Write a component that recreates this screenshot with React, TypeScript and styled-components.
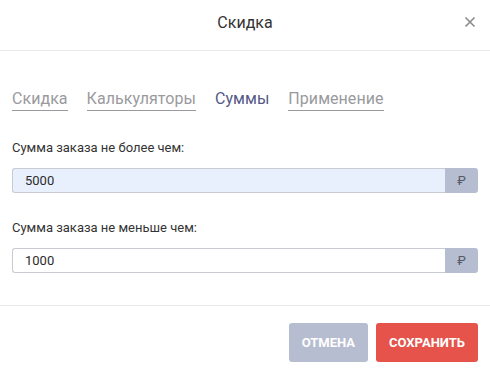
import React, { ReactElement, useState } from 'react'
import styled, { createGlobalStyle } from 'styled-components'

const GlobalStyle = createGlobalStyle`
  * { box-sizing: border-box; }
  body {
    margin: 0;
    background: #fff;
    font-family: Roboto, 'Noto Sans', sans-serif;
  }
`

const Modal = styled.div`
  width: 490px;
  height: 376px;
  background: #fff;
  display: flex;
  flex-direction: column;
`

const Header = styled.div`
  position: relative;
  height: 51px;
  border-bottom: 1px solid #e9e9ec;
  display: flex;
  align-items: center;
  justify-content: center;
  padding-bottom: 6px;
`

const Title = styled.h2`
  margin: 0;
  font-size: 16px;
  font-weight: 400;
  color: #333;
`

const CloseButton = styled.button`
  position: absolute;
  right: 12px;
  top: 14px;
  width: 16px;
  height: 16px;
  padding: 0;
  border: none;
  background: none;
  cursor: pointer;
  color: #8a8a8a;
`

const Body = styled.div`
  padding: 38px 12px 0;
  flex: 1;
  border-bottom: 1px solid #e9e9ec;
`

const Tabs = styled.div`
  display: flex;
  gap: 19px;
  margin-bottom: 29px;
`

const Tab = styled.button<{ active: boolean }>`
  padding: 0 0 2px;
  border: none;
  background: none;
  font-family: inherit;
  font-size: 16px;
  letter-spacing: 0.05px;
  line-height: 19px;
  cursor: pointer;
  color: ${({ active }) => (active ? '#545a85' : '#9a9a9e')};
  border-bottom: 1px solid ${({ active }) => (active ? 'transparent' : '#9a9a9e')};
`

const Field = styled.div`
  margin-bottom: 27px;
`

const Label = styled.div`
  font-size: 13px;
  color: #333;
  line-height: 16px;
  margin-bottom: 12px;
`

const InputGroup = styled.div`
  display: flex;
  height: 25px;
  width: 466px;
`

const Input = styled.input<{ filled: boolean }>`
  flex: 1;
  min-width: 0;
  height: 25px;
  border: 1px solid #c9cbd3;
  border-right: none;
  border-radius: 3px 0 0 3px;
  padding: 0 12px;
  font-family: inherit;
  font-size: 13px;
  color: #2b2b2b;
  background: ${({ filled }) => (filled ? '#e8f0fe' : '#fff')};
  outline: none;
`

const Addon = styled.span`
  width: 33px;
  display: flex;
  align-items: center;
  justify-content: center;
  background: #b7bdd0;
  border-radius: 0 3px 3px 0;
  font-size: 13px;
  color: #555a6a;
`

const Footer = styled.div`
  height: 70px;
  display: flex;
  justify-content: flex-end;
  align-items: flex-start;
  gap: 8px;
  padding: 17px 12px 0;
`

const Button = styled.button<{ primary?: boolean }>`
  height: 39px;
  padding: 0 13px;
  border: none;
  border-radius: 3px;
  font-family: inherit;
  font-size: 13px;
  font-weight: 700;
  text-transform: uppercase;
  color: #fff;
  cursor: pointer;
  background: ${({ primary }) => (primary ? '#e5534b' : '#b7bdd0')};
  min-width: ${({ primary }) => (primary ? '102px' : '79px')};
`

const tabs = ['Скидка', 'Калькуляторы', 'Суммы', 'Применение']

const App = (): ReactElement => {
  const [active, setActive] = useState(2)
  const [max, setMax] = useState('5000')
  const [min, setMin] = useState('1000')

  return (
    <Modal>
      <GlobalStyle />
      <Header>
        <Title>Скидка</Title>
        <CloseButton aria-label="close">
          <svg width="16" height="16" viewBox="0 0 16 16">
            <path d="M3.5 3.5l9 9M12.5 3.5l-9 9" stroke="currentColor" strokeWidth="1.6" />
          </svg>
        </CloseButton>
      </Header>
      <Body>
        <Tabs>
          {tabs.map((t, i) => (
            <Tab key={t} active={i === active} onClick={() => setActive(i)}>
              {t}
            </Tab>
          ))}
        </Tabs>
        <Field>
          <Label>Сумма заказа не более чем:</Label>
          <InputGroup>
            <Input filled value={max} onChange={(e) => setMax(e.target.value)} />
            <Addon>₽</Addon>
          </InputGroup>
        </Field>
        <Field>
          <Label>Сумма заказа не меньше чем:</Label>
          <InputGroup>
            <Input filled={false} value={min} onChange={(e) => setMin(e.target.value)} />
            <Addon>₽</Addon>
          </InputGroup>
        </Field>
      </Body>
      <Footer>
        <Button>Отмена</Button>
        <Button primary>Сохранить</Button>
      </Footer>
    </Modal>
  )
}

export default App
